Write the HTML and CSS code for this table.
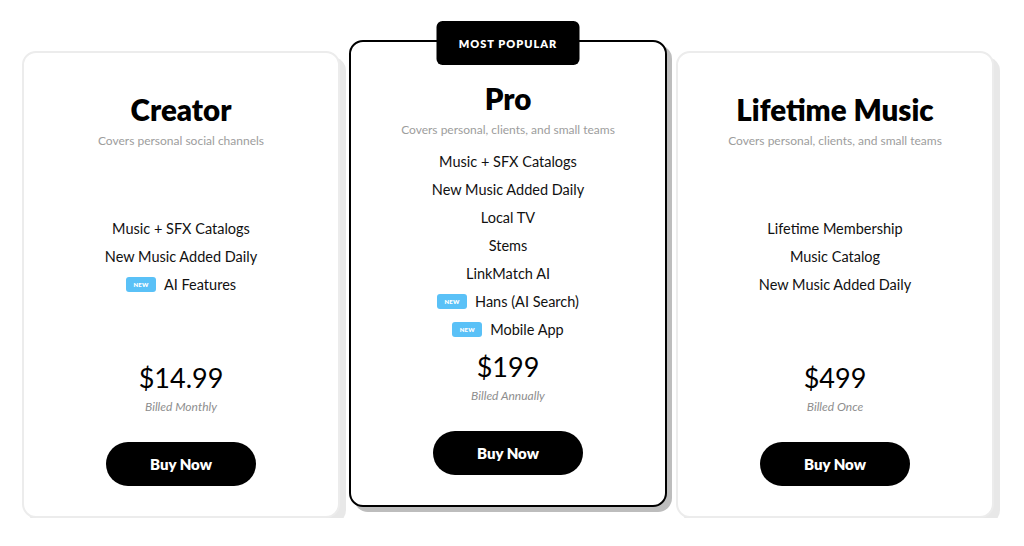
FILE: index.html
```html
<!DOCTYPE html>
<html>
<head>
<meta charset="utf-8">
<link rel="stylesheet" href="styles.css">
</head>
<body>
<div class="plans">
  <div class="card side">
    <h2 class="title">Creator</h2>
    <p class="sub">Covers personal social channels</p>
    <ul class="features">
      <li>Music + SFX Catalogs</li>
      <li>New Music Added Daily</li>
      <li><span class="new">NEW</span>AI Features</li>
    </ul>
    <div class="price">$14.99</div>
    <div class="billed">Billed Monthly</div>
    <a class="buy">Buy Now</a>
  </div>
  <div class="card featured">
    <div class="badge">MOST POPULAR</div>
    <h2 class="title">Pro</h2>
    <p class="sub">Covers personal, clients, and small teams</p>
    <ul class="features">
      <li>Music + SFX Catalogs</li>
      <li>New Music Added Daily</li>
      <li>Local TV</li>
      <li>Stems</li>
      <li>LinkMatch AI</li>
      <li><span class="new">NEW</span>Hans (AI Search)</li>
      <li><span class="new">NEW</span>Mobile App</li>
    </ul>
    <div class="price">$199</div>
    <div class="billed">Billed Annually</div>
    <a class="buy">Buy Now</a>
  </div>
  <div class="card side">
    <h2 class="title">Lifetime Music</h2>
    <p class="sub">Covers personal, clients, and small teams</p>
    <ul class="features">
      <li>Lifetime Membership</li>
      <li>Music Catalog</li>
      <li>New Music Added Daily</li>
    </ul>
    <div class="price">$499</div>
    <div class="billed">Billed Once</div>
    <a class="buy">Buy Now</a>
  </div>
</div>
</body>
</html>
```

FILE: styles.css
```css
* { box-sizing: border-box; }
body {
  margin: 0;
  background: #fff;
  font-family: "Lato", "Liberation Sans", sans-serif;
  color: #111;
}
.plans {
  display: flex;
  align-items: flex-start;
  gap: 9px;
  padding: 40px 0 0 22px;
}
.card {
  position: relative;
  width: 318px;
  height: 467px;
  border-radius: 14px;
  background: #fff;
  display: flex;
  flex-direction: column;
  align-items: center;
  padding: 40px 16px 30px;
  text-align: center;
}
.side {
  margin-top: 11px;
  border: 2px solid #ececec;
  box-shadow: 6px 6px 0 #e8e8e8;
}
.featured {
  border: 2px solid #000;
  box-shadow: 5px 5px 0 #bdbdbd;
}
.badge {
  position: absolute;
  top: -21px;
  left: 50%;
  transform: translateX(-50%);
  width: 143px;
  height: 44px;
  background: #000;
  color: #fff;
  border-radius: 6px;
  font-size: 11px;
  font-weight: 800;
  letter-spacing: 1px;
  display: flex;
  align-items: center;
  justify-content: center;
}
.title {
  margin: 0;
  font-size: 29.5px;
  line-height: 34px;
  font-weight: 800;
  color: #000;
}
.sub {
  margin: 6px 0 0;
  font-size: 12px;
  line-height: 16px;
  color: #9d9d9d;
}
.features {
  list-style: none;
  margin: 3px 0 0;
  padding: 0;
  flex: 1;
  display: flex;
  flex-direction: column;
  justify-content: center;
}
.features li {
  font-size: 14.5px;
  line-height: 28px;
  display: flex;
  align-items: center;
  justify-content: center;
  color: #111;
}
.new {
  display: inline-flex;
  align-items: center;
  justify-content: center;
  width: 30px;
  height: 15px;
  margin-right: 8px;
  border-radius: 3px;
  background: #5ac1f7;
  color: #fff;
  font-size: 6px;
  font-weight: 800;
  letter-spacing: 0.2px;
}
.price {
  font-size: 27px;
  line-height: 34px;
  color: #000;
}
.billed {
  margin-top: 4px;
  font-size: 12px;
  line-height: 16px;
  font-style: italic;
  color: #8e8e8e;
}
.buy {
  margin-top: 27px;
  width: 150px;
  height: 44px;
  border-radius: 22px;
  background: #000;
  color: #fff;
  font-size: 15px;
  font-weight: 800;
  display: flex;
  align-items: center;
  justify-content: center;
}
```
